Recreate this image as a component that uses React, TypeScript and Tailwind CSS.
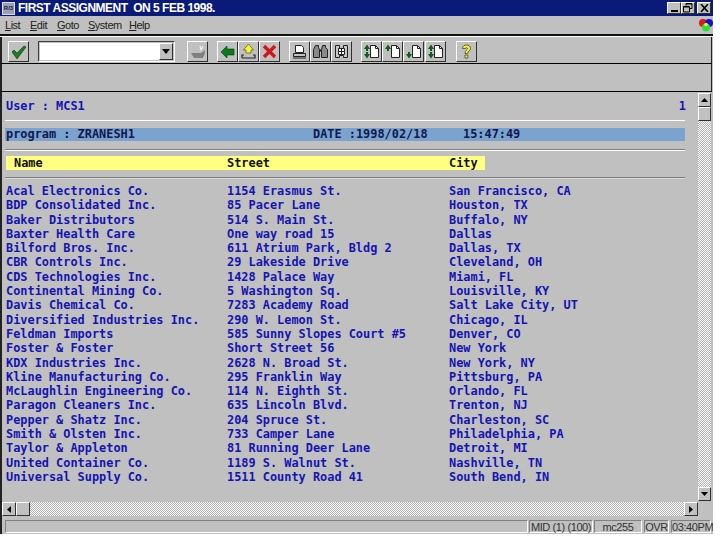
import React from 'react'

type Row = {
  name: string
  street: string
  city: string
}

const rows: Row[] = [
  { name: 'Acal Electronics Co.', street: '1154 Erasmus St.', city: 'San Francisco, CA' },
  { name: 'BDP Consolidated Inc.', street: '85 Pacer Lane', city: 'Houston, TX' },
  { name: 'Baker Distributors', street: '514 S. Main St.', city: 'Buffalo, NY' },
  { name: 'Baxter Health Care', street: 'One way road 15', city: 'Dallas' },
  { name: 'Bilford Bros. Inc.', street: '611 Atrium Park, Bldg 2', city: 'Dallas, TX' },
  { name: 'CBR Controls Inc.', street: '29 Lakeside Drive', city: 'Cleveland, OH' },
  { name: 'CDS Technologies Inc.', street: '1428 Palace Way', city: 'Miami, FL' },
  { name: 'Continental Mining Co.', street: '5 Washington Sq.', city: 'Louisville, KY' },
  { name: 'Davis Chemical Co.', street: '7283 Academy Road', city: 'Salt Lake City, UT' },
  { name: 'Diversified Industries Inc.', street: '290 W. Lemon St.', city: 'Chicago, IL' },
  { name: 'Feldman Imports', street: '585 Sunny Slopes Court #5', city: 'Denver, CO' },
  { name: 'Foster & Foster', street: 'Short Street 56', city: 'New York' },
  { name: 'KDX Industries Inc.', street: '2628 N. Broad St.', city: 'New York, NY' },
  { name: 'Kline Manufacturing Co.', street: '295 Franklin Way', city: 'Pittsburg, PA' },
  { name: 'McLaughlin Engineering Co.', street: '114 N. Eighth St.', city: 'Orlando, FL' },
  { name: 'Paragon Cleaners Inc.', street: '635 Lincoln Blvd.', city: 'Trenton, NJ' },
  { name: 'Pepper & Shatz Inc.', street: '204 Spruce St.', city: 'Charleston, SC' },
  { name: 'Smith & Olsten Inc.', street: '733 Camper Lane', city: 'Philadelphia, PA' },
  { name: 'Taylor & Appleton', street: '81 Running Deer Lane', city: 'Detroit, MI' },
  { name: 'United Container Co.', street: '1189 S. Walnut St.', city: 'Nashville, TN' },
  { name: 'Universal Supply Co.', street: '1511 County Road 41', city: 'South Bend, IN' }
]

const raised = 'border border-t-white border-l-white border-r-[#303030] border-b-[#303030] bg-[#c0c0c0]'
const sunken = 'border border-t-[#808080] border-l-[#808080] border-r-white border-b-white'
const dither = 'bg-[repeating-conic-gradient(#ffffff_0_25%,#b0b0b0_0_50%)] bg-size-[2px_2px]'

function ToolButton({ className, children }: { className?: string; children: React.ReactNode }) {
  return (
    <div className={`w-[21px] h-[21px] shrink-0 flex items-center justify-center ${raised} ${className ?? ''}`}>
      {children}
    </div>
  )
}

function ScrollButton({ className, children }: { className?: string; children?: React.ReactNode }) {
  return (
    <div className={`h-[14px] shrink-0 flex items-center justify-center ${raised} ${className ?? ''}`}>
      {children}
    </div>
  )
}

function PageIcon({ arrows }: { arrows: 'both' | 'up' | 'down' | 'split' }) {
  return (
    <svg width="17" height="17" viewBox="0 0 17 17">
      <path d="M7.500 2.500h5l3 3v9h-8z" fill="#fff" stroke="#222" />
      <path d="M12.500 2.500v3h3" fill="none" stroke="#222" />
      {(arrows === 'up' || arrows === 'both' || arrows === 'split') && (
        <path d="M4 1.500 L7 6 H5 V8 H3 V6 H1 Z" fill="#0b5d18" />
      )}
      {(arrows === 'down' || arrows === 'both' || arrows === 'split') && (
        <path d="M4 15.500 L7 11 H5 V9 H3 V11 H1 Z" fill="#0b5d18" />
      )}
    </svg>
  )
}

export default function App() {
  return (
    <div className="w-[713px] h-[534px] bg-[#c0c0c0] flex flex-col overflow-hidden font-['Liberation_Sans',sans-serif]">
      {/* title bar */}
      <div className="h-[16px] shrink-0 bg-[#0a1a78] flex items-center pl-[2px] pr-[2px]">
        <div className="w-[13px] h-[13px] bg-[#9aa0b8] border border-[#dddddd] text-[6px] leading-[10px] font-bold text-[#202040] text-center overflow-hidden">
          R/3
        </div>
        <span className="ml-[3px] text-[12px] font-bold text-white tracking-[-0.5px] whitespace-pre">
          FIRST ASSIGNMENT  ON 5 FEB 1998.
        </span>
        <div className="ml-auto flex items-center">
          <div className={`w-[14px] h-[12px] flex items-end justify-center pb-[1px] ${raised}`}>
            <div className="w-[7px] h-[2px] bg-black" />
          </div>
          <div className={`w-[14px] h-[12px] flex items-center justify-center ${raised}`}>
            <svg width="10" height="10" viewBox="0 0 10 10">
              <path d="M3 .5h6v5H7M3 .5v2M.5 3.500h6v5.500h-6z" fill="none" stroke="#000" />
              <path d="M3 1h6M1 4h5" stroke="#000" />
            </svg>
          </div>
          <div className={`ml-[2px] w-[14px] h-[12px] flex items-center justify-center ${raised}`}>
            <svg width="9" height="8" viewBox="0 0 9 8">
              <path d="M1 0l7 8M8 0L1 8" stroke="#000" strokeWidth="1.600" />
            </svg>
          </div>
        </div>
      </div>

      {/* menu bar */}
      <div className="h-[18px] shrink-0 flex items-center relative text-[11px] tracking-[-0.5px] text-[#222222]">
        <span className="ml-[5px] w-[25px]"><u>L</u>ist</span>
        <span className="w-[27px]"><u>E</u>dit</span>
        <span className="w-[31px]"><u>G</u>oto</span>
        <span className="w-[41px]"><u>S</u>ystem</span>
        <span><u>H</u>elp</span>
        <svg className="absolute right-0 top-[2px]" width="14" height="14" viewBox="0 0 14 14">
          <circle cx="4" cy="5" r="4" fill="#e01818" />
          <circle cx="10" cy="5" r="4" fill="#1010d0" />
          <circle cx="7" cy="9.500" r="4" fill="#30e030" />
          <circle cx="7" cy="6.500" r="1.800" fill="#f0f040" />
        </svg>
      </div>

      {/* application toolbar */}
      <div className="h-[3px] shrink-0 bg-[#101010] border-b border-white" />
      <div className="h-[27px] shrink-0 mr-[1px] border-l-2 border-l-[#222222] border-r border-r-[#222222] border-b border-b-black flex items-center pl-[6px] pt-[3px]">
        <ToolButton>
          <svg width="16" height="14" viewBox="0 0 16 14">
            <path d="M1 7l2-2 3 3 7-7 2 1-9 12z" fill="#1f7a22" stroke="#0b3a0c" strokeWidth="0.600" />
          </svg>
        </ToolButton>
        <div className="ml-[9px] w-[137px] h-[21px] shrink-0 flex border border-t-[#404040] border-l-[#404040] border-r-white border-b-white p-[1px]">
          <div className="flex-1 bg-white" />
          <div className={`w-[14px] flex items-center justify-center ${raised}`}>
            <svg width="8" height="5" viewBox="0 0 8 5"><path d="M0 0h8L4 5z" fill="#000" /></svg>
          </div>
        </div>
        <ToolButton className="ml-[12px]">
          <svg width="16" height="14" viewBox="0 0 16 14">
            <path d="M1 8h10l4-3v3l-2 5H4z" fill="#808080" />
            <path d="M10 1l1 4M13 1l-2 4" stroke="#f4f4f4" strokeWidth="1.200" />
          </svg>
        </ToolButton>
        <ToolButton className="ml-[9px]">
          <svg width="14" height="12" viewBox="0 0 14 12">
            <path d="M0 6l6-6v3h7v6H6v3z" fill="#0e7a1c" stroke="#06350c" strokeWidth="0.600" />
          </svg>
        </ToolButton>
        <ToolButton>
          <svg width="15" height="15" viewBox="0 0 15 15">
            <path d="M7.500 0l5 6H10v3H5V6H2.500z" fill="#f5f530" stroke="#404000" strokeWidth="0.600" />
            <path d="M1 14h13v-3h-2M3 11H1v3" fill="none" stroke="#222" strokeWidth="1.200" />
          </svg>
        </ToolButton>
        <ToolButton>
          <svg width="15" height="15" viewBox="0 0 15 15">
            <path d="M2 2l11 11M13 2L2 13" stroke="#d01818" strokeWidth="3.400" />
          </svg>
        </ToolButton>
        <ToolButton className="ml-[9px]">
          <svg width="15" height="15" viewBox="0 0 15 15">
            <path d="M3.500 1.500h6l2 2v5h-8z" fill="#fff" stroke="#222" />
            <path d="M1.500 9.500h12v3h-12z" fill="#c0c0c0" stroke="#222" />
            <path d="M1 14h13" stroke="#222" />
          </svg>
        </ToolButton>
        <ToolButton>
          <svg width="17" height="15" viewBox="0 0 17 15">
            <path d="M3.500 1.500h3v2l1 2v8h-6v-8zM10.500 1.500h3v2l2 2v8h-6v-8z" fill="#8a8a8a" stroke="#222" />
            <path d="M7.500 6.500h2" stroke="#222" strokeWidth="2" />
          </svg>
        </ToolButton>
        <ToolButton>
          <svg width="17" height="15" viewBox="0 0 17 15">
            <path d="M2.500 1.500h4v3h4v-3h4v12h-4v-2h-4v2h-4z" fill="#c8c8c8" stroke="#222" />
            <path d="M5.500 4.500h6v6h-6z" fill="#fff" stroke="#222" />
            <path d="M8.500 5v5M6 7.500h5" stroke="#222" />
          </svg>
        </ToolButton>
        <ToolButton className="ml-[9px]"><PageIcon arrows="both" /></ToolButton>
        <ToolButton><PageIcon arrows="up" /></ToolButton>
        <ToolButton><PageIcon arrows="down" /></ToolButton>
        <ToolButton className="ml-[1px]"><PageIcon arrows="split" /></ToolButton>
        <ToolButton className="ml-[10px]">
          <svg width="11" height="15" viewBox="0 0 11 15">
            <path d="M1.500 4.500C1.500 2 3.500 1 5.500 1S9.500 2 9.500 4.500 6.500 7 6.500 9.500H4C4 6 6.500 6 6.500 4.500 6.500 3.500 4.500 3.500 4.500 4.500z" fill="#f4f430" stroke="#333" strokeWidth="0.700" />
            <path d="M4 11h2.800v3H4z" fill="#f4f430" stroke="#333" strokeWidth="0.700" />
          </svg>
        </ToolButton>
      </div>

      {/* second toolbar */}
      <div className="h-[28px] shrink-0 mr-[1px] border-l-2 border-l-[#222222] border-r border-r-[#222222] border-b border-b-black" />

      {/* list screen */}
      <div className="flex-1 min-h-0 flex border-l-2 border-l-[#222222]">
        <div className="flex-1 min-w-0 flex flex-col">
          <div className="flex-1 min-h-0 font-['DejaVu_Sans_Mono',monospace] text-[11.9px] font-bold leading-[14px] text-[#1414b4] pl-[4px] pr-[12px] pt-[7px] whitespace-pre">
            <div className="flex justify-between h-[14px]">
              <span>User : MCS1</span>
              <span>1</span>
            </div>
            <div className="mt-[7px] -ml-[1px] w-[680px] h-[1px] bg-white" />
            <div className="mt-[7px] -ml-[1px] w-[680px] h-[13px] leading-[13px] bg-[#7ba3cf] text-[#101850] flex pl-[1px]">
              <span className="w-[307px]">program : ZRANESH1</span>
              <span className="w-[150px]">DATE :1998/02/18</span>
              <span>15:47:49</span>
            </div>
            <div className="mt-[8px] -ml-[1px] w-[680px] h-[2px] border-t border-t-[#7f7f7f] border-b border-b-white" />
            <div className="mt-[5px] w-[479px] h-[14px] bg-[#ffff80] text-[#101010] grid grid-cols-[221px_222px_1fr] pl-[8px]">
              <span>Name</span>
              <span className="-ml-[8px]">Street</span>
              <span className="-ml-[8px]">City</span>
            </div>
            <div className="mt-[7px] -ml-[1px] w-[680px] h-[2px] border-t border-t-[#7f7f7f] border-b border-b-[#d8d8d8]" />
            <div className="mt-[5px] flex flex-col">
              {rows.map((row, index) => (
                <div key={index} className="grid grid-cols-[221px_222px_1fr] h-[14.3px] leading-[14.3px]">
                  <span>{row.name}</span>
                  <span>{row.street}</span>
                  <span>{row.city}</span>
                </div>
              ))}
            </div>
          </div>

          {/* horizontal scrollbar */}
          <div className="h-[14px] shrink-0 flex">
            <ScrollButton className="w-[14px]">
              <svg width="4" height="7" viewBox="0 0 4 7"><path d="M4 0v7L0 3.500z" fill="#000" /></svg>
            </ScrollButton>
            <ScrollButton className="w-[14px]" />
            <div className={`flex-1 ${dither}`} />
            <ScrollButton className="w-[14px]">
              <svg width="4" height="7" viewBox="0 0 4 7"><path d="M0 0v7l4-3.500z" fill="#000" /></svg>
            </ScrollButton>
          </div>
        </div>

        {/* vertical scrollbar */}
        <div className="w-[13px] mr-[2px] shrink-0 flex flex-col pt-[1px] pb-[15px]">
          <ScrollButton>
            <svg width="7" height="4" viewBox="0 0 7 4"><path d="M0 4h7L3.500 0z" fill="#000" /></svg>
          </ScrollButton>
          <ScrollButton />
          <div className={`flex-1 ${dither}`} />
          <ScrollButton>
            <svg width="7" height="4" viewBox="0 0 7 4"><path d="M0 0h7L3.500 4z" fill="#000" /></svg>
          </ScrollButton>
        </div>
      </div>

      {/* status bar */}
      <div className="h-[18px] shrink-0 flex items-start border-l-2 border-l-[#222222] pt-[4px] pl-[3px] pr-[2px] text-[11px] tracking-[-0.4px] leading-[12px] text-[#333333] whitespace-pre">
        <div className={`flex-1 h-[13px] ${sunken}`} />
        <div className={`ml-[1px] w-[64px] h-[13px] text-center ${sunken}`}>MID (1) (100)</div>
        <div className={`ml-[1px] w-[48px] h-[13px] text-center ${sunken}`}>mc255</div>
        <div className={`ml-[2px] w-[25px] h-[13px] text-center ${sunken}`}>OVR</div>
        <div className={`ml-[2px] w-[40px] h-[13px] text-center ${sunken}`}>03:40PM</div>
      </div>
    </div>
  )
}
